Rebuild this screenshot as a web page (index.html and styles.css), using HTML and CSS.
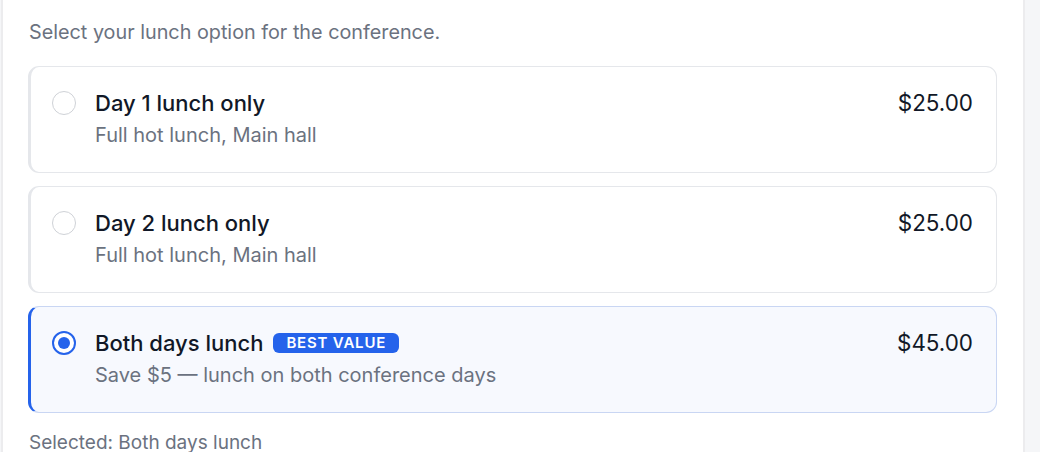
FILE: index.html
```html
<!DOCTYPE html>
<html lang="en">
<head>
<meta charset="utf-8">
<title>Lunch option</title>
<link rel="stylesheet" href="styles.css">
</head>
<body>
<main class="panel">
  <p class="intro">Select your lunch option for the conference.</p>
  <div class="options" role="radiogroup">
    <label class="option">
      <span class="radio"></span>
      <span class="info">
        <span class="title">Day 1 lunch only</span>
        <span class="desc">Full hot lunch, Main hall</span>
      </span>
      <span class="price">$25.00</span>
    </label>
    <label class="option">
      <span class="radio"></span>
      <span class="info">
        <span class="title">Day 2 lunch only</span>
        <span class="desc">Full hot lunch, Main hall</span>
      </span>
      <span class="price">$25.00</span>
    </label>
    <label class="option selected">
      <span class="radio"></span>
      <span class="info">
        <span class="title"><span>Both days lunch</span><span class="badge">BEST VALUE</span></span>
        <span class="desc">Save $5 — lunch on both conference days</span>
      </span>
      <span class="price">$45.00</span>
    </label>
  </div>
  <p class="status">Selected: Both days lunch</p>
</main>
</body>
</html>
```
FILE: styles.css
```css
* { box-sizing: border-box; }
html, body { margin: 0; padding: 0; }
body {
  background: #f5f6f8;
  font-family: Inter, "Noto Sans", sans-serif;
  color: #111827;
  padding-left: 1px;
  height: 452px;
  overflow: hidden;
}
.panel {
  width: 1024px;
  min-height: 452px;
  background: #ffffff;
  border-left: 2px solid #ececee;
  border-right: 2px solid #ececee;
  padding: 19px 26px 0 25px;
}
.intro {
  margin: 0 0 21px 1px;
  font-size: 19.8px;
  line-height: 26px;
  color: #6b7280;
}
.options {
  display: flex;
  flex-direction: column;
  gap: 13px;
}
.option {
  display: flex;
  align-items: flex-start;
  gap: 19px;
  min-height: 107px;
  padding: 22px 23px 20px 21px;
  border: 1px solid #e5e7eb;
  border-left: 3px solid #e5e7eb;
  border-radius: 11px;
  background: #fff;
}
.option.selected {
  background: #f7f9fe;
  border-color: #c9d6f3;
  border-left-color: #2563eb;
}
.radio {
  flex: none;
  width: 24px;
  height: 24px;
  margin-top: 2px;
  border-radius: 50%;
  border: 1.5px solid #cfd2d7;
  background: #fff;
  position: relative;
}
.selected .radio {
  border: 2px solid #2563eb;
}
.selected .radio::after {
  content: "";
  position: absolute;
  left: 4px;
  top: 4px;
  width: 12px;
  height: 12px;
  border-radius: 50%;
  background: #2563eb;
}
.info {
  flex: 1;
  display: flex;
  flex-direction: column;
  gap: 5px;
}
.title {
  display: flex;
  align-items: center;
  gap: 10px;
  font-size: 22px;
  line-height: 28px;
  font-weight: 500;
  color: #111827;
}
.desc {
  font-size: 20px;
  line-height: 26px;
  color: #6b7280;
}
.badge {
  display: inline-block;
  background: #2563eb;
  color: #fff;
  font-size: 15px;
  font-weight: 600;
  letter-spacing: 0.8px;
  line-height: 20px;
  padding: 0 13px;
  border-radius: 6px;
}
.price {
  flex: none;
  font-size: 22.4px;
  line-height: 28px;
  font-weight: 400;
  color: #111827;
}
.status {
  margin: 18px 0 0 1px;
  font-size: 19px;
  line-height: 24px;
  color: #6b7280;
}
```
